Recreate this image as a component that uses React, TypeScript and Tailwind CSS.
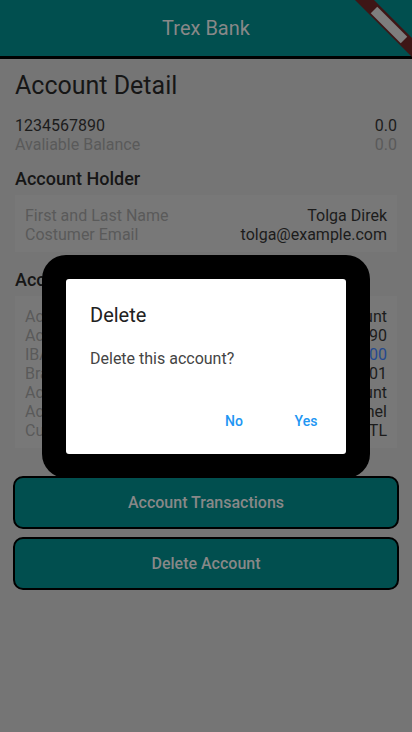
import React from "react";

const holder = [
  { label: "First and Last Name", value: "Tolga Direk" },
  { label: "Costumer Email", value: "tolga@example.com" },
];

const info = [
  { label: "Account Name", value: "Savings Account" },
  { label: "Account Number", value: "1234567890" },
  { label: "IBAN", value: "TR00 0000 0000 0000 00", link: true },
  { label: "Branch Code", value: "0001" },
  { label: "Account Type", value: "Deposit Account" },
  { label: "Account Channel", value: "Mobile Channel" },
  { label: "Currency", value: "TL" },
];

function DebugBanner() {
  return (
    <svg className="absolute top-0 right-0" width="60" height="60" viewBox="0 0 60 60">
      <polygon points="3,0 22,0 60,38 60,57" fill="#3e1616" />
      <polygon points="18.75,13.25 25.25,6.75 55.25,36.75 48.75,43.25" fill="#7e7e7e" />
    </svg>
  );
}

function InfoRow({ label, value, link }: { label: string; value: string; link?: boolean }) {
  return (
    <div className="flex justify-between h-[19px] leading-[19px] text-[16px]">
      <span className="text-[#5a5a5a]">{label}</span>
      <span className={link ? "text-[#24498f]" : "text-[#1c1c1c]"}>{value}</span>
    </div>
  );
}

export default function App() {
  return (
    <div
      className="relative w-full h-[732px] overflow-hidden bg-[#757575]"
      style={{ fontFamily: "Roboto, 'Noto Sans', sans-serif" }}
    >
      <header className="relative h-[59px] bg-[#014f4f] border-b-[3px] border-black flex items-center justify-center">
        <span className="text-[20px] text-[#888888]">Trex Bank</span>
        <DebugBanner />
      </header>

      <main className="px-[15px]">
        <h1 className="mt-[13px] text-[25px] leading-[28px] text-[#161616]">Account Detail</h1>

        <div className="mt-[16px] text-[16px] leading-[19px]">
          <div className="flex justify-between text-[#1c1c1c]">
            <span>1234567890</span>
            <span>0.0</span>
          </div>
          <div className="flex justify-between text-[#5a5a5a]">
            <span>Avaliable Balance</span>
            <span>0.0</span>
          </div>
        </div>

        <h2 className="mt-[14px] text-[18px] leading-[22px] font-medium text-[#161616]">Account Holder</h2>
        <div className="mt-[5px] bg-[#787878] px-[10px] pt-[11px] pb-[8px]">
          {holder.map((r) => (
            <InfoRow key={r.label} {...r} />
          ))}
        </div>

        <h2 className="mt-[17px] text-[18px] leading-[22px] font-medium text-[#161616]">Account Information</h2>
        <div className="mt-[5px] bg-[#787878] px-[10px] pt-[11px] pb-[8px]">
          {info.map((r) => (
            <InfoRow key={r.label} {...r} />
          ))}
        </div>

        <div className="-mx-[2px] mt-[28px] flex flex-col gap-2">
          <button className="h-[53px] rounded-[10px] border-2 border-black bg-[#014f4f] text-[16px] font-medium text-[#888888]">
            Account Transactions
          </button>
          <button className="h-[53px] rounded-[10px] border-2 border-black bg-[#014f4f] text-[16px] font-medium text-[#888888]">
            Delete Account
          </button>
        </div>
      </main>

      <div className="absolute inset-0 flex items-center justify-center">
        <div className="w-[328px] rounded-[24px] bg-black p-6">
          <div className="rounded-[3px] bg-white">
            <div className="px-6 pt-6">
              <h3 className="text-[20px] leading-[24px] text-[#212121]">Delete</h3>
              <p className="mt-5 text-[16px] leading-[24px] text-[#444444]">Delete this account?</p>
            </div>
            <div className="mt-[33px] flex justify-end gap-2 pr-2 pb-[14px]">
              <button className="h-9 min-w-[64px] px-2 text-[14px] font-medium text-[#2196f3]">No</button>
              <button className="h-9 min-w-[64px] px-2 text-[14px] font-medium text-[#2196f3]">Yes</button>
            </div>
          </div>
        </div>
      </div>
    </div>
  );
}
